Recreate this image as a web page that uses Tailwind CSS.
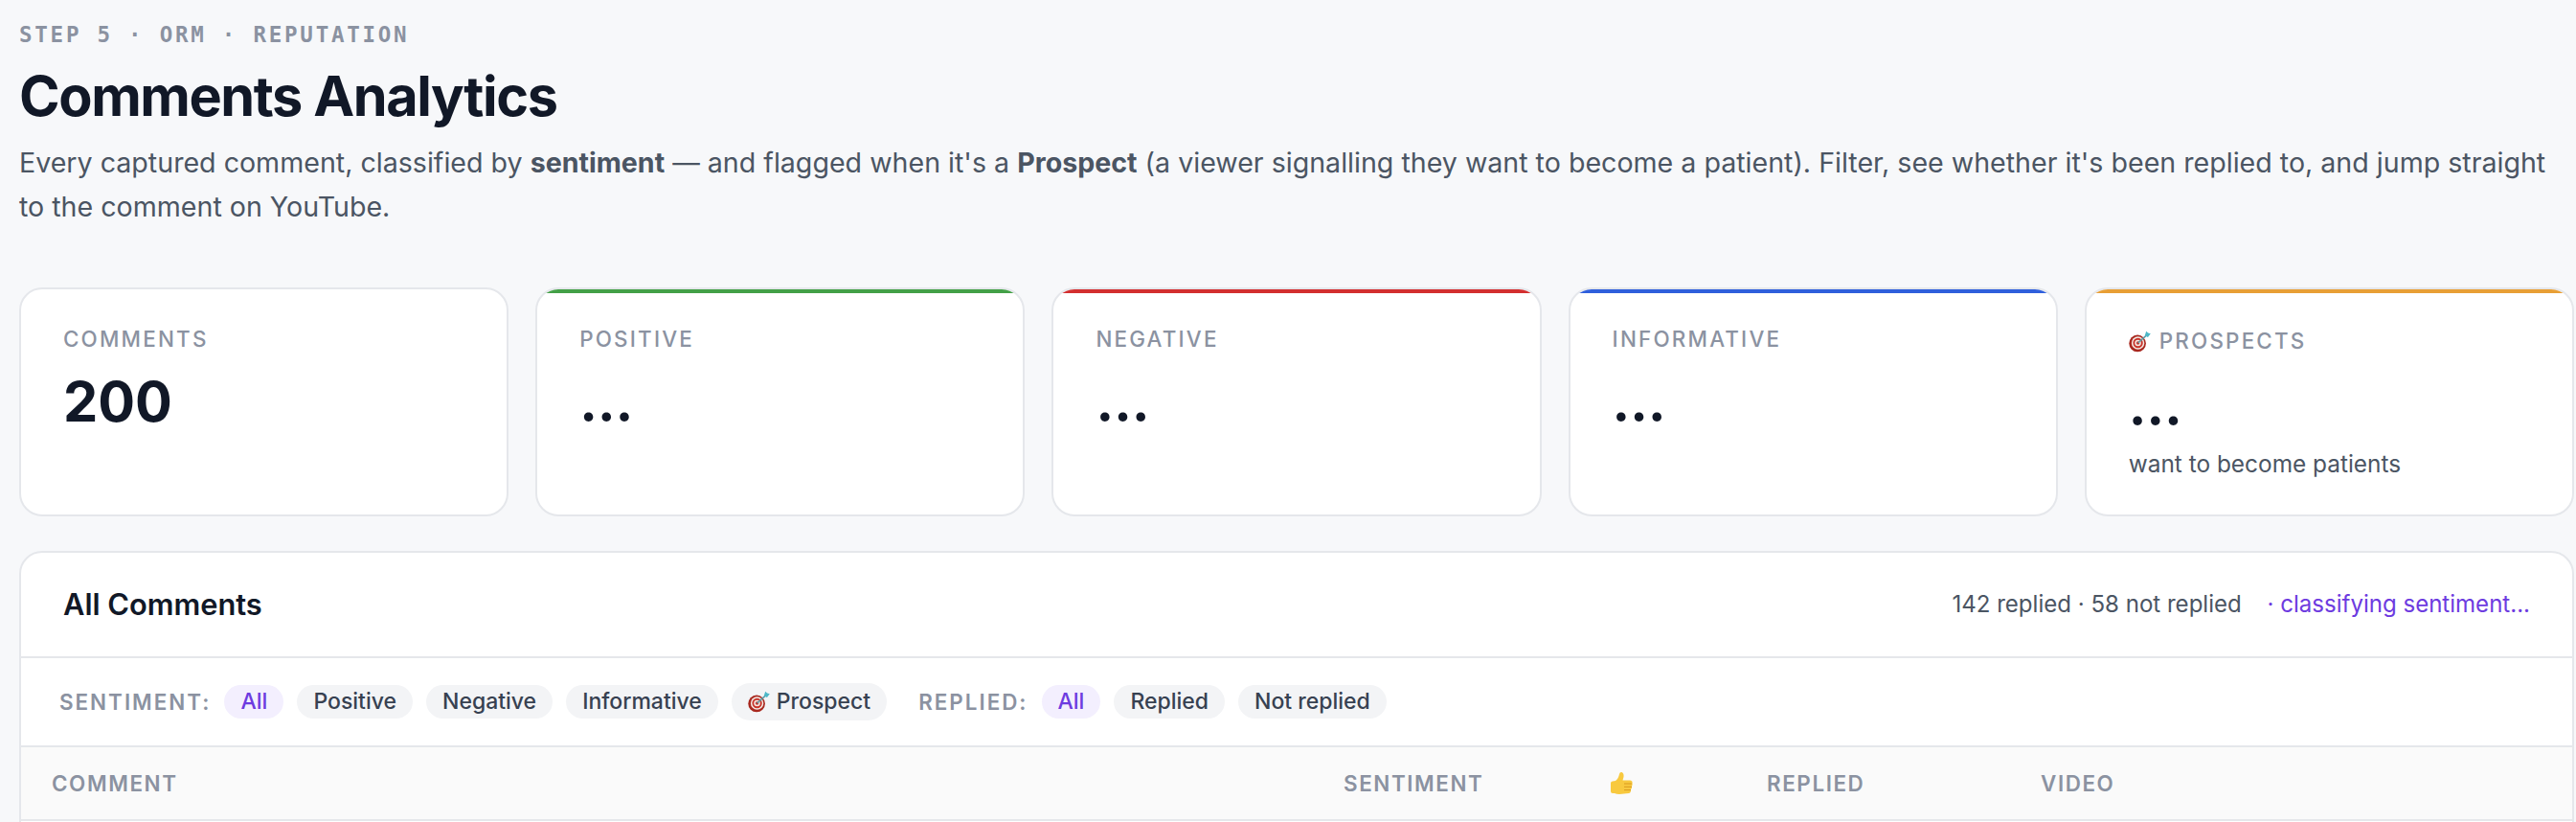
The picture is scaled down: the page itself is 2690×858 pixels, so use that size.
<!DOCTYPE html>
<html><head><meta charset="utf-8"><script src="https://cdn.jsdelivr.net/npm/@tailwindcss/browser@4"></script></head>
<body class="bg-[#f7f8fa] overflow-hidden font-['Inter',sans-serif]">
<div class="h-[858px] pl-5 w-[2690px] overflow-hidden">
  <div class="pt-[24px] font-['DejaVu_Sans_Mono',monospace] font-bold text-[22.5px] leading-[24px] tracking-[2.75px] text-[#8b92a1]">STEP 5 · ORM · REPUTATION</div>
  <h1 class="mt-[18px] text-[57.6px] leading-[68px] font-bold tracking-[-1.4px] text-[#111827]">Comments Analytics</h1>
  <p class="mt-[13px] text-[28.6px] leading-[46px] text-[#4b5563] w-[2660px]">Every captured comment, classified by <b class="font-bold">sentiment</b> — and flagged when it's a <b class="font-bold">Prospect</b> (a viewer signalling they want to become a patient). Filter, see whether it's been replied to, and jump straight to the comment on YouTube.</p>
  <div class="mt-[61px] grid grid-cols-5 gap-[28px] w-[2668px]">
    <div class="relative overflow-hidden h-[239px] bg-white rounded-[24px] border-2 border-[#e5e7eb] px-[44px] pt-[38px]">
      <div class="text-[22.4px] leading-[28px] tracking-[2.2px] font-medium text-[#8b92a1]">COMMENTS</div>
      <div class="mt-[15px] text-[57.6px] leading-[72px] font-bold text-[#111827]">200</div>
    </div>
    <div class="relative overflow-hidden h-[239px] bg-white rounded-[24px] border-2 border-[#e5e7eb] px-[44px] pt-[38px]">
      <div class="absolute left-0 right-0 top-0 h-[4px] bg-[#43a047]"></div>
      <div class="text-[22.4px] leading-[28px] tracking-[2.2px] font-medium text-[#8b92a1]">POSITIVE</div>
      <div class="mt-[21px] text-[56px] leading-[60px] font-bold text-[#111827]">…</div>
    </div>
    <div class="relative overflow-hidden h-[239px] bg-white rounded-[24px] border-2 border-[#e5e7eb] px-[44px] pt-[38px]">
      <div class="absolute left-0 right-0 top-0 h-[4px] bg-[#d32f2f]"></div>
      <div class="text-[22.4px] leading-[28px] tracking-[2.2px] font-medium text-[#8b92a1]">NEGATIVE</div>
      <div class="mt-[21px] text-[56px] leading-[60px] font-bold text-[#111827]">…</div>
    </div>
    <div class="relative overflow-hidden h-[239px] bg-white rounded-[24px] border-2 border-[#e5e7eb] px-[44px] pt-[38px]">
      <div class="absolute left-0 right-0 top-0 h-[4px] bg-[#2f5fdc]"></div>
      <div class="text-[22.4px] leading-[28px] tracking-[2.2px] font-medium text-[#8b92a1]">INFORMATIVE</div>
      <div class="mt-[21px] text-[56px] leading-[60px] font-bold text-[#111827]">…</div>
    </div>
    <div class="relative overflow-hidden h-[239px] bg-white rounded-[24px] border-2 border-[#e5e7eb] px-[44px] pt-[40px]">
      <div class="absolute left-0 right-0 top-0 h-[4px] bg-[#e89f35]"></div>
      <div class="flex items-center gap-[9px] text-[22.4px] leading-[28px] tracking-[2.2px] font-medium text-[#8b92a1]">
        <svg class="w-[23px] h-[23px] shrink-0" viewBox="0 0 24 24"><circle cx="9.5" cy="14" r="9.2" fill="#a8281f"/><circle cx="10" cy="13.6" r="7" fill="#f3e9e4"/><circle cx="10" cy="13.6" r="5.4" fill="#c9352b"/><circle cx="10" cy="13.6" r="3.4" fill="#f3e9e4"/><circle cx="10" cy="13.6" r="1.8" fill="#c9352b"/><path d="M10 13.6L20 4.5" stroke="#5b9aa5" stroke-width="1.6"/><path d="M17.5 5.5L19 0.8L21 2.6L23.8 3.4L20.8 7.2Z" fill="#4db8c8"/></svg>
        <span>PROSPECTS</span></div>
      <div class="mt-[23px] text-[56px] leading-[60px] font-bold text-[#111827]">…</div>
      <div class="mt-[15px] text-[24.4px] leading-[32px] text-[#4b5563]">want to become patients</div>
    </div>
  </div>
  <div class="mt-[36px] w-[2668px] h-[400px] bg-white rounded-[24px] border-2 border-[#e5e7eb]">
    <div class="h-[110px] flex items-center justify-between px-[44px] border-b-2 border-[#e5e7eb]">
      <div class="text-[30.8px] font-semibold text-[#111827]">All Comments</div>
      <div class="text-[24.05px] text-[#4b5563]">142 replied · 58 not replied <span class="ml-[20px] text-[#6d3be0]">· classifying sentiment...</span></div>
    </div>
    <div class="h-[93px] flex items-center pl-[40px] gap-[14px] border-b-2 border-[#e5e7eb]">
      <span class="text-[22.4px] tracking-[2px] font-semibold text-[#8b92a1]">SENTIMENT:</span>
      <span class="px-[17px] h-[35px] leading-[35px] rounded-full bg-[#f3effe] text-[#6d3be0] text-[23px] font-medium">All</span>
      <span class="px-[17px] h-[35px] leading-[35px] rounded-full bg-[#f3f4f6] text-[#374151] text-[23px] font-medium">Positive</span>
      <span class="px-[17px] h-[35px] leading-[35px] rounded-full bg-[#f3f4f6] text-[#374151] text-[23px] font-medium">Negative</span>
      <span class="px-[17px] h-[35px] leading-[35px] rounded-full bg-[#f3f4f6] text-[#374151] text-[23px] font-medium">Informative</span>
      <span class="flex items-center gap-[7px] px-[17px] h-[39px] rounded-full bg-[#f3f4f6] text-[#374151] text-[23px] font-medium">
        <svg class="w-[23px] h-[23px] shrink-0" viewBox="0 0 24 24"><circle cx="9.5" cy="14" r="9.2" fill="#a8281f"/><circle cx="10" cy="13.6" r="7" fill="#f3e9e4"/><circle cx="10" cy="13.6" r="5.4" fill="#c9352b"/><circle cx="10" cy="13.6" r="3.4" fill="#f3e9e4"/><circle cx="10" cy="13.6" r="1.8" fill="#c9352b"/><path d="M10 13.6L20 4.5" stroke="#5b9aa5" stroke-width="1.6"/><path d="M17.5 5.5L19 0.8L21 2.6L23.8 3.4L20.8 7.2Z" fill="#4db8c8"/></svg>
        Prospect</span>
      <span class="ml-[19px] text-[22.4px] tracking-[2px] font-semibold text-[#8b92a1]">REPLIED:</span>
      <span class="px-[17px] h-[35px] leading-[35px] rounded-full bg-[#f3effe] text-[#6d3be0] text-[23px] font-medium">All</span>
      <span class="px-[17px] h-[35px] leading-[35px] rounded-full bg-[#f3f4f6] text-[#374151] text-[23px] font-medium">Replied</span>
      <span class="px-[17px] h-[35px] leading-[35px] rounded-full bg-[#f3f4f6] text-[#374151] text-[23px] font-medium">Not replied</span>
    </div>
    <div class="h-[77px] flex items-center bg-[#fafafa] border-b-2 border-[#e5e7eb] text-[22.4px] tracking-[1.6px] font-semibold text-[#8b92a1]">
      <span class="ml-[32px] w-[1349px]">COMMENT</span><span class="w-[278px]">SENTIMENT</span><span class="w-[164px] flex">
        <svg class="w-[24px] h-[26px]" viewBox="0 0 24 26"><path d="M1 12.5Q1 10.5 3 10.5L6 10Q9 8 10 3Q10.5 .5 12.5 1Q15 2 14.5 6L13.5 9.5L21 9.5Q24 10 23.5 12Q24 14 23 15.5Q23.5 17.5 22 19Q22.5 22 20 23L10 24Q7 24 5 23L3 23Q1 23 1 21Z" fill="#f8c93f"/><path d="M15 13H23M15 16.3H23M15 19.6H22" stroke="#d99a1e" stroke-width="1" fill="none"/></svg></span><span class="w-[286px]">REPLIED</span><span>VIDEO</span>
    </div>
  </div>
</div>
</body></html>
